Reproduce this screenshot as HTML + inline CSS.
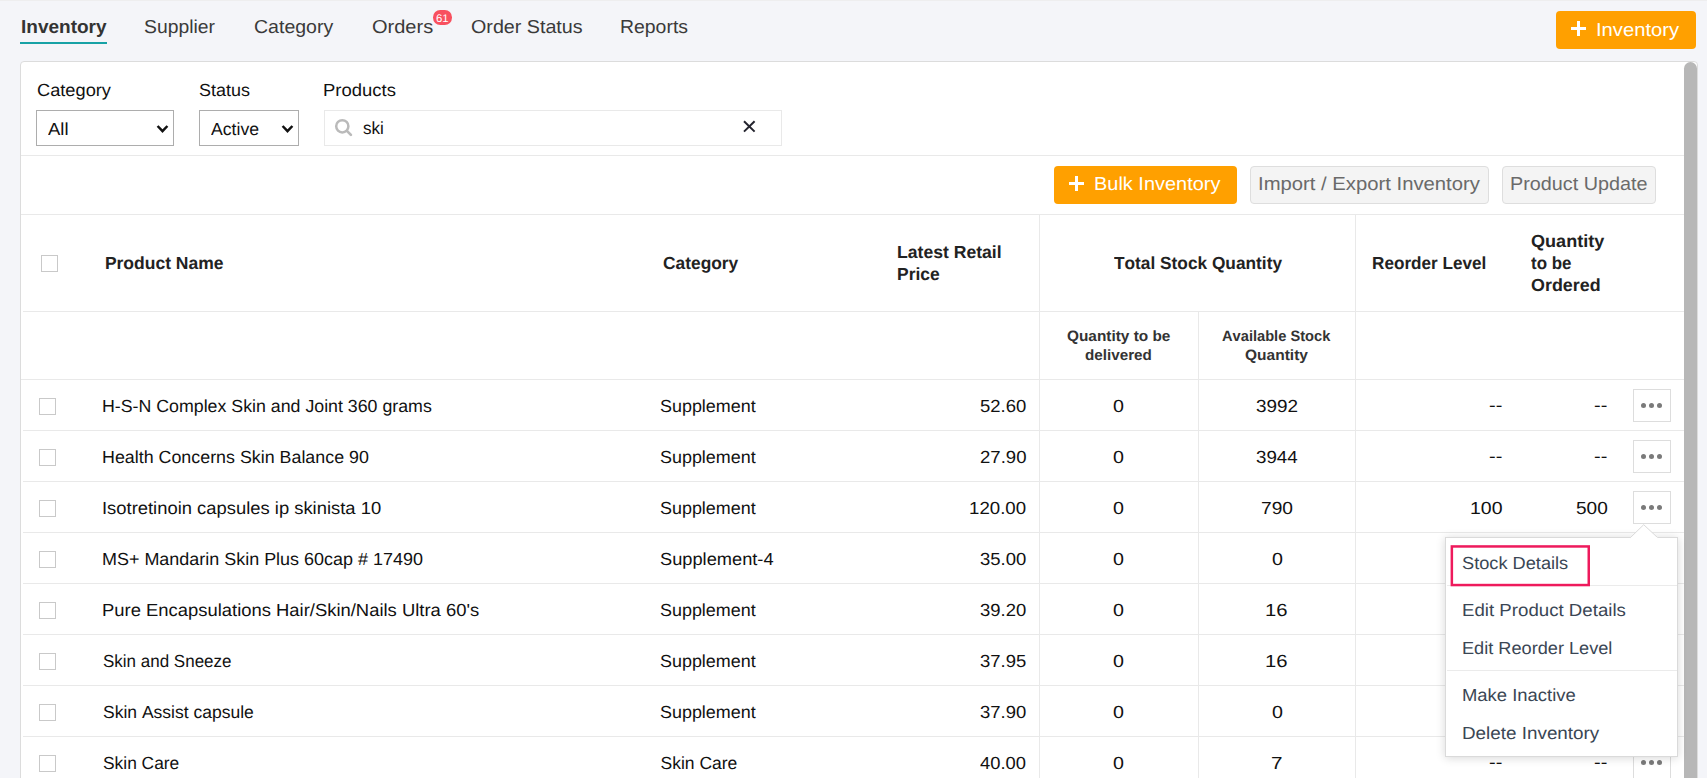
<!DOCTYPE html>
<html><head><meta charset="utf-8"><title>Inventory</title>
<style>
html,body{margin:0;padding:0;}
body{width:1707px;height:778px;overflow:hidden;background:#f4f5f9;position:relative;font-family:"Liberation Sans", sans-serif;font-kerning:none;text-rendering:geometricPrecision;}
.t{position:absolute;white-space:nowrap;line-height:1;transform-origin:0 0;}
.b{position:absolute;}
</style></head>
<body>
<div class="b" style="left:0px;top:0px;width:1707px;height:1px;background:#eeeeef;"></div>
<span class="t" style="left:20.53px;top:17.92px;font-size:18.75px;color:#333;font-weight:bold;transform:scaleX(1.0140);">Inventory</span>
<div class="b" style="left:20px;top:42px;width:87px;height:2.2px;background:#17a2a6;"></div>
<span class="t" style="left:144.42px;top:17.92px;font-size:18.75px;color:#3a3a3a;transform:scaleX(1.0306);">Supplier</span>
<span class="t" style="left:253.81px;top:17.92px;font-size:18.75px;color:#3a3a3a;transform:scaleX(1.0414);">Category</span>
<span class="t" style="left:371.55px;top:17.92px;font-size:18.75px;color:#3a3a3a;transform:scaleX(1.0675);">Orders</span>
<span class="t" style="left:470.87px;top:17.92px;font-size:18.75px;color:#3a3a3a;transform:scaleX(1.0503);">Order Status</span>
<span class="t" style="left:620.21px;top:17.92px;font-size:18.75px;color:#3a3a3a;transform:scaleX(1.0357);">Reports</span>
<div class="b" style="left:433px;top:10px;width:19px;height:14.5px;background:#f8505f;border-radius:7.25px;"></div>
<span class="t" style="left:436.27px;top:13.69px;font-size:11px;color:#fff;transform:scaleX(1.0323);">61</span>
<div class="b" style="left:1556px;top:11px;width:140px;height:38px;background:#ffa000;border-radius:4px;"></div>
<div class="b" style="left:1571.0px;top:27.200000000000003px;width:15px;height:2.8px;background:#fff;"></div>
<div class="b" style="left:1577.1px;top:21.1px;width:2.8px;height:15px;background:#fff;"></div>
<span class="t" style="left:1595.94px;top:20.67px;font-size:18.75px;color:#fff;transform:scaleX(1.0775);">Inventory</span>
<div class="b" style="left:20px;top:61px;width:1678px;height:740px;background:#fff;border:1px solid #dcdcdc;border-radius:4px;box-sizing:border-box;"></div>
<div class="b" style="left:1684px;top:62px;width:13px;height:740px;background:#b7b7b7;border-radius:6.5px 6.5px 0 0;"></div>
<span class="t" style="left:36.57px;top:82.28px;font-size:17.5px;color:#111;transform:scaleX(1.0416);">Category</span>
<span class="t" style="left:198.68px;top:82.28px;font-size:17.5px;color:#111;transform:scaleX(1.0273);">Status</span>
<span class="t" style="left:323.29px;top:82.28px;font-size:17.5px;color:#111;transform:scaleX(1.0553);">Products</span>
<div class="b" style="left:36px;top:110px;width:138px;height:36px;box-sizing:border-box;border:1px solid #adadad;border-radius:0;background:#fff;"></div>
<div class="b" style="left:199px;top:110px;width:100px;height:36px;box-sizing:border-box;border:1px solid #adadad;border-radius:0;background:#fff;"></div>
<span class="t" style="left:48.26px;top:120.98px;font-size:17.5px;color:#111;transform:scaleX(1.0524);">All</span>
<span class="t" style="left:210.77px;top:120.98px;font-size:17.5px;color:#111;transform:scaleX(1.0076);">Active</span>
<svg class="b" style="left:155px;top:123.4px" width="15" height="11.5" viewBox="-2 -2 15 11.5"><path d="M0.6 1 L5.5 6.1 L10.4 1" fill="none" stroke="#111" stroke-width="2.5" stroke-linecap="butt" stroke-linejoin="miter"/></svg>
<svg class="b" style="left:280px;top:123.4px" width="15" height="11.5" viewBox="-2 -2 15 11.5"><path d="M0.6 1 L5.5 6.1 L10.4 1" fill="none" stroke="#111" stroke-width="2.5" stroke-linecap="butt" stroke-linejoin="miter"/></svg>
<div class="b" style="left:324px;top:110px;width:458px;height:36px;box-sizing:border-box;border:1px solid #e9e9e9;background:#fff;"></div>
<svg class="b" style="left:333px;top:117px" width="22" height="22" viewBox="0 0 22 22"><circle cx="9.3" cy="9.3" r="6.1" fill="none" stroke="#bababa" stroke-width="2.5"/><path d="M13.9 13.9 L17.9 17.9" stroke="#bababa" stroke-width="2.7" stroke-linecap="round"/></svg>
<span class="t" style="left:362.83px;top:120.28px;font-size:17.5px;color:#111;transform:scaleX(0.9735);">ski</span>
<svg class="b" style="left:741px;top:118.4px" width="16" height="16" viewBox="0 0 16 16"><path d="M3 3.2 L13.6 13.6 M13.6 3.2 L3 13.6" stroke="#24242e" stroke-width="2" fill="none"/></svg>
<div class="b" style="left:21px;top:155px;width:1663px;height:1px;background:#e9e9e9;"></div>
<div class="b" style="left:1054px;top:166px;width:183px;height:38px;background:#ffa000;border-radius:4px;"></div>
<div class="b" style="left:1069.0px;top:182.4px;width:15px;height:2.8px;background:#fff;"></div>
<div class="b" style="left:1075.1px;top:176.3px;width:2.8px;height:15px;background:#fff;"></div>
<span class="t" style="left:1094.16px;top:175.42px;font-size:18.75px;color:#fff;transform:scaleX(1.0637);">Bulk Inventory</span>
<div class="b" style="left:1250px;top:166px;width:239px;height:38px;box-sizing:border-box;background:#f4f4f4;border:1px solid #dedede;border-radius:4px;"></div>
<span class="t" style="left:1257.68px;top:175.42px;font-size:18.75px;color:#6a6a6a;transform:scaleX(1.0807);">Import / Export Inventory</span>
<div class="b" style="left:1502px;top:166px;width:154px;height:38px;box-sizing:border-box;background:#f4f4f4;border:1px solid #dedede;border-radius:4px;"></div>
<span class="t" style="left:1509.68px;top:175.42px;font-size:18.75px;color:#6a6a6a;transform:scaleX(1.0550);">Product Update</span>
<div class="b" style="left:21px;top:214px;width:1663px;height:1px;background:#e9e9e9;"></div>
<div class="b" style="left:23px;top:311px;width:1661px;height:1px;background:#e9e9e9;"></div>
<div class="b" style="left:21px;top:379px;width:1663px;height:1px;background:#e9e9e9;"></div>
<div class="b" style="left:23px;top:430px;width:1661px;height:1px;background:#e9e9e9;"></div>
<div class="b" style="left:23px;top:481px;width:1661px;height:1px;background:#e9e9e9;"></div>
<div class="b" style="left:23px;top:532px;width:1661px;height:1px;background:#e9e9e9;"></div>
<div class="b" style="left:23px;top:583px;width:1661px;height:1px;background:#e9e9e9;"></div>
<div class="b" style="left:23px;top:634px;width:1661px;height:1px;background:#e9e9e9;"></div>
<div class="b" style="left:23px;top:685px;width:1661px;height:1px;background:#e9e9e9;"></div>
<div class="b" style="left:23px;top:736px;width:1661px;height:1px;background:#e9e9e9;"></div>
<div class="b" style="left:1039px;top:214px;width:1px;height:564px;background:#e9e9e9;"></div>
<div class="b" style="left:1198px;top:311px;width:1px;height:467px;background:#e9e9e9;"></div>
<div class="b" style="left:1355px;top:214px;width:1px;height:564px;background:#e9e9e9;"></div>
<div class="b" style="left:41px;top:255px;width:17px;height:17px;box-sizing:border-box;border:1px solid #c9c9c9;background:#fff;"></div>
<span class="t" style="left:104.88px;top:254.73px;font-size:17.5px;color:#222;font-weight:bold;">Product Name</span>
<span class="t" style="left:663.34px;top:254.73px;font-size:17.5px;color:#222;font-weight:bold;transform:scaleX(0.9921);">Category</span>
<span class="t" style="left:896.62px;top:243.98px;font-size:17.5px;color:#222;font-weight:bold;transform:scaleX(1.0054);">Latest Retail</span>
<span class="t" style="left:896.63px;top:265.98px;font-size:17.5px;color:#222;font-weight:bold;transform:scaleX(0.9978);">Price</span>
<span class="t" style="left:1113.61px;top:255.48px;font-size:17.5px;color:#222;font-weight:bold;transform:scaleX(0.9873);">Total Stock Quantity</span>
<span class="t" style="left:1371.90px;top:254.98px;font-size:17.5px;color:#222;font-weight:bold;transform:scaleX(0.9794);">Reorder Level</span>
<span class="t" style="left:1530.56px;top:232.98px;font-size:17.5px;color:#222;font-weight:bold;transform:scaleX(1.0326);">Quantity</span>
<span class="t" style="left:1531.09px;top:254.98px;font-size:17.5px;color:#222;font-weight:bold;transform:scaleX(0.9685);">to be</span>
<span class="t" style="left:1530.57px;top:276.98px;font-size:17.5px;color:#222;font-weight:bold;transform:scaleX(1.0226);">Ordered</span>
<span class="t" style="left:1066.92px;top:329.00px;font-size:15px;color:#333;font-weight:bold;transform:scaleX(1.0250);">Quantity to be</span>
<span class="t" style="left:1085.18px;top:347.70px;font-size:15px;color:#333;font-weight:bold;transform:scaleX(1.0146);">delivered</span>
<span class="t" style="left:1222.44px;top:329.00px;font-size:15px;color:#333;font-weight:bold;transform:scaleX(0.9767);">Available Stock</span>
<span class="t" style="left:1245.16px;top:347.70px;font-size:15px;color:#333;font-weight:bold;transform:scaleX(1.0343);">Quantity</span>
<div class="b" style="left:39px;top:398px;width:17px;height:17px;box-sizing:border-box;border:1px solid #c9c9c9;background:#fff;"></div>
<span class="t" style="left:102.34px;top:397.73px;font-size:17.5px;color:#111;transform:scaleX(1.0152);">H-S-N Complex Skin and Joint 360 grams</span>
<span class="t" style="left:660.49px;top:397.73px;font-size:17.5px;color:#111;transform:scaleX(1.0241);">Supplement</span>
<span class="t" style="left:979.96px;top:397.73px;font-size:17.5px;color:#111;transform:scaleX(1.0564);">52.60</span>
<span class="t" style="left:1113.13px;top:397.73px;font-size:17.5px;color:#111;transform:scaleX(1.1237);">0</span>
<span class="t" style="left:1255.88px;top:397.73px;font-size:17.5px;color:#111;transform:scaleX(1.0807);">3992</span>
<span class="t" style="left:1489.11px;top:397.13px;font-size:17.5px;color:#111;transform:scaleX(1.1386);">--</span>
<span class="t" style="left:1594.11px;top:397.13px;font-size:17.5px;color:#111;transform:scaleX(1.1386);">--</span>
<div class="b" style="left:1633px;top:389px;width:38px;height:33px;box-sizing:border-box;border:1px solid #dddddd;background:#fff;"></div>
<div class="b" style="left:1640.7px;top:403.2px;width:5px;height:5px;background:#7a7a7a;border-radius:50%;"></div>
<div class="b" style="left:1648.9px;top:403.2px;width:5px;height:5px;background:#7a7a7a;border-radius:50%;"></div>
<div class="b" style="left:1657.1px;top:403.2px;width:5px;height:5px;background:#7a7a7a;border-radius:50%;"></div>
<div class="b" style="left:39px;top:449px;width:17px;height:17px;box-sizing:border-box;border:1px solid #c9c9c9;background:#fff;"></div>
<span class="t" style="left:102.34px;top:448.73px;font-size:17.5px;color:#111;transform:scaleX(1.0198);">Health Concerns Skin Balance 90</span>
<span class="t" style="left:660.49px;top:448.73px;font-size:17.5px;color:#111;transform:scaleX(1.0241);">Supplement</span>
<span class="t" style="left:979.77px;top:448.73px;font-size:17.5px;color:#111;transform:scaleX(1.0609);">27.90</span>
<span class="t" style="left:1113.13px;top:448.73px;font-size:17.5px;color:#111;transform:scaleX(1.1237);">0</span>
<span class="t" style="left:1255.89px;top:448.73px;font-size:17.5px;color:#111;transform:scaleX(1.0702);">3944</span>
<span class="t" style="left:1489.11px;top:448.13px;font-size:17.5px;color:#111;transform:scaleX(1.1386);">--</span>
<span class="t" style="left:1594.11px;top:448.13px;font-size:17.5px;color:#111;transform:scaleX(1.1386);">--</span>
<div class="b" style="left:1633px;top:440px;width:38px;height:33px;box-sizing:border-box;border:1px solid #dddddd;background:#fff;"></div>
<div class="b" style="left:1640.7px;top:454.2px;width:5px;height:5px;background:#7a7a7a;border-radius:50%;"></div>
<div class="b" style="left:1648.9px;top:454.2px;width:5px;height:5px;background:#7a7a7a;border-radius:50%;"></div>
<div class="b" style="left:1657.1px;top:454.2px;width:5px;height:5px;background:#7a7a7a;border-radius:50%;"></div>
<div class="b" style="left:39px;top:500px;width:17px;height:17px;box-sizing:border-box;border:1px solid #c9c9c9;background:#fff;"></div>
<span class="t" style="left:102.10px;top:499.73px;font-size:17.5px;color:#111;transform:scaleX(1.0511);">Isotretinoin capsules ip skinista 10</span>
<span class="t" style="left:660.49px;top:499.73px;font-size:17.5px;color:#111;transform:scaleX(1.0241);">Supplement</span>
<span class="t" style="left:969.13px;top:499.73px;font-size:17.5px;color:#111;transform:scaleX(1.0668);">120.00</span>
<span class="t" style="left:1113.13px;top:499.73px;font-size:17.5px;color:#111;transform:scaleX(1.1237);">0</span>
<span class="t" style="left:1260.69px;top:499.73px;font-size:17.5px;color:#111;transform:scaleX(1.0953);">790</span>
<span class="t" style="left:1470.47px;top:499.73px;font-size:17.5px;color:#111;transform:scaleX(1.1129);">100</span>
<span class="t" style="left:1575.99px;top:499.73px;font-size:17.5px;color:#111;transform:scaleX(1.0876);">500</span>
<div class="b" style="left:1633px;top:491px;width:38px;height:33px;box-sizing:border-box;border:1px solid #dddddd;background:#fff;"></div>
<div class="b" style="left:1640.7px;top:505.2px;width:5px;height:5px;background:#7a7a7a;border-radius:50%;"></div>
<div class="b" style="left:1648.9px;top:505.2px;width:5px;height:5px;background:#7a7a7a;border-radius:50%;"></div>
<div class="b" style="left:1657.1px;top:505.2px;width:5px;height:5px;background:#7a7a7a;border-radius:50%;"></div>
<div class="b" style="left:39px;top:551px;width:17px;height:17px;box-sizing:border-box;border:1px solid #c9c9c9;background:#fff;"></div>
<span class="t" style="left:102.33px;top:550.73px;font-size:17.5px;color:#111;transform:scaleX(1.0259);">MS+ Mandarin Skin Plus 60cap # 17490</span>
<span class="t" style="left:660.47px;top:550.73px;font-size:17.5px;color:#111;transform:scaleX(1.0423);">Supplement-4</span>
<span class="t" style="left:980.00px;top:550.73px;font-size:17.5px;color:#111;transform:scaleX(1.0555);">35.00</span>
<span class="t" style="left:1113.13px;top:550.73px;font-size:17.5px;color:#111;transform:scaleX(1.1237);">0</span>
<span class="t" style="left:1271.73px;top:550.73px;font-size:17.5px;color:#111;transform:scaleX(1.1237);">0</span>
<span class="t" style="left:1489.11px;top:550.13px;font-size:17.5px;color:#111;transform:scaleX(1.1386);">--</span>
<span class="t" style="left:1594.11px;top:550.13px;font-size:17.5px;color:#111;transform:scaleX(1.1386);">--</span>
<div class="b" style="left:1633px;top:542px;width:38px;height:33px;box-sizing:border-box;border:1px solid #dddddd;background:#fff;"></div>
<div class="b" style="left:1640.7px;top:556.2px;width:5px;height:5px;background:#7a7a7a;border-radius:50%;"></div>
<div class="b" style="left:1648.9px;top:556.2px;width:5px;height:5px;background:#7a7a7a;border-radius:50%;"></div>
<div class="b" style="left:1657.1px;top:556.2px;width:5px;height:5px;background:#7a7a7a;border-radius:50%;"></div>
<div class="b" style="left:39px;top:602px;width:17px;height:17px;box-sizing:border-box;border:1px solid #c9c9c9;background:#fff;"></div>
<span class="t" style="left:102.29px;top:601.73px;font-size:17.5px;color:#111;transform:scaleX(1.0524);">Pure Encapsulations Hair/Skin/Nails Ultra 60&#x27;s</span>
<span class="t" style="left:660.49px;top:601.73px;font-size:17.5px;color:#111;transform:scaleX(1.0241);">Supplement</span>
<span class="t" style="left:980.00px;top:601.73px;font-size:17.5px;color:#111;transform:scaleX(1.0555);">39.20</span>
<span class="t" style="left:1113.13px;top:601.73px;font-size:17.5px;color:#111;transform:scaleX(1.1237);">0</span>
<span class="t" style="left:1265.21px;top:601.73px;font-size:17.5px;color:#111;transform:scaleX(1.1576);">16</span>
<span class="t" style="left:1489.11px;top:601.13px;font-size:17.5px;color:#111;transform:scaleX(1.1386);">--</span>
<span class="t" style="left:1594.11px;top:601.13px;font-size:17.5px;color:#111;transform:scaleX(1.1386);">--</span>
<div class="b" style="left:1633px;top:593px;width:38px;height:33px;box-sizing:border-box;border:1px solid #dddddd;background:#fff;"></div>
<div class="b" style="left:1640.7px;top:607.2px;width:5px;height:5px;background:#7a7a7a;border-radius:50%;"></div>
<div class="b" style="left:1648.9px;top:607.2px;width:5px;height:5px;background:#7a7a7a;border-radius:50%;"></div>
<div class="b" style="left:1657.1px;top:607.2px;width:5px;height:5px;background:#7a7a7a;border-radius:50%;"></div>
<div class="b" style="left:39px;top:653px;width:17px;height:17px;box-sizing:border-box;border:1px solid #c9c9c9;background:#fff;"></div>
<span class="t" style="left:103.03px;top:652.73px;font-size:17.5px;color:#111;transform:scaleX(0.9710);">Skin and Sneeze</span>
<span class="t" style="left:660.49px;top:652.73px;font-size:17.5px;color:#111;transform:scaleX(1.0241);">Supplement</span>
<span class="t" style="left:980.00px;top:652.73px;font-size:17.5px;color:#111;transform:scaleX(1.0568);">37.95</span>
<span class="t" style="left:1113.13px;top:652.73px;font-size:17.5px;color:#111;transform:scaleX(1.1237);">0</span>
<span class="t" style="left:1265.21px;top:652.73px;font-size:17.5px;color:#111;transform:scaleX(1.1576);">16</span>
<span class="t" style="left:1489.11px;top:652.13px;font-size:17.5px;color:#111;transform:scaleX(1.1386);">--</span>
<span class="t" style="left:1594.11px;top:652.13px;font-size:17.5px;color:#111;transform:scaleX(1.1386);">--</span>
<div class="b" style="left:1633px;top:644px;width:38px;height:33px;box-sizing:border-box;border:1px solid #dddddd;background:#fff;"></div>
<div class="b" style="left:1640.7px;top:658.2px;width:5px;height:5px;background:#7a7a7a;border-radius:50%;"></div>
<div class="b" style="left:1648.9px;top:658.2px;width:5px;height:5px;background:#7a7a7a;border-radius:50%;"></div>
<div class="b" style="left:1657.1px;top:658.2px;width:5px;height:5px;background:#7a7a7a;border-radius:50%;"></div>
<div class="b" style="left:39px;top:704px;width:17px;height:17px;box-sizing:border-box;border:1px solid #c9c9c9;background:#fff;"></div>
<span class="t" style="left:103.00px;top:703.73px;font-size:17.5px;color:#111;">Skin Assist capsule</span>
<span class="t" style="left:660.49px;top:703.73px;font-size:17.5px;color:#111;transform:scaleX(1.0241);">Supplement</span>
<span class="t" style="left:980.00px;top:703.73px;font-size:17.5px;color:#111;transform:scaleX(1.0555);">37.90</span>
<span class="t" style="left:1113.13px;top:703.73px;font-size:17.5px;color:#111;transform:scaleX(1.1237);">0</span>
<span class="t" style="left:1271.73px;top:703.73px;font-size:17.5px;color:#111;transform:scaleX(1.1237);">0</span>
<span class="t" style="left:1489.11px;top:703.13px;font-size:17.5px;color:#111;transform:scaleX(1.1386);">--</span>
<span class="t" style="left:1594.11px;top:703.13px;font-size:17.5px;color:#111;transform:scaleX(1.1386);">--</span>
<div class="b" style="left:1633px;top:695px;width:38px;height:33px;box-sizing:border-box;border:1px solid #dddddd;background:#fff;"></div>
<div class="b" style="left:1640.7px;top:709.2px;width:5px;height:5px;background:#7a7a7a;border-radius:50%;"></div>
<div class="b" style="left:1648.9px;top:709.2px;width:5px;height:5px;background:#7a7a7a;border-radius:50%;"></div>
<div class="b" style="left:1657.1px;top:709.2px;width:5px;height:5px;background:#7a7a7a;border-radius:50%;"></div>
<div class="b" style="left:39px;top:755px;width:17px;height:17px;box-sizing:border-box;border:1px solid #c9c9c9;background:#fff;"></div>
<span class="t" style="left:103.01px;top:754.73px;font-size:17.5px;color:#111;transform:scaleX(0.9925);">Skin Care</span>
<span class="t" style="left:660.51px;top:754.73px;font-size:17.5px;color:#111;">Skin Care</span>
<span class="t" style="left:980.28px;top:754.73px;font-size:17.5px;color:#111;transform:scaleX(1.0490);">40.00</span>
<span class="t" style="left:1113.13px;top:754.73px;font-size:17.5px;color:#111;transform:scaleX(1.1237);">0</span>
<span class="t" style="left:1271.44px;top:754.73px;font-size:17.5px;color:#111;transform:scaleX(1.1816);">7</span>
<span class="t" style="left:1489.11px;top:754.13px;font-size:17.5px;color:#111;transform:scaleX(1.1386);">--</span>
<span class="t" style="left:1594.11px;top:754.13px;font-size:17.5px;color:#111;transform:scaleX(1.1386);">--</span>
<div class="b" style="left:1633px;top:746px;width:38px;height:33px;box-sizing:border-box;border:1px solid #dddddd;background:#fff;"></div>
<div class="b" style="left:1640.7px;top:760.2px;width:5px;height:5px;background:#7a7a7a;border-radius:50%;"></div>
<div class="b" style="left:1648.9px;top:760.2px;width:5px;height:5px;background:#7a7a7a;border-radius:50%;"></div>
<div class="b" style="left:1657.1px;top:760.2px;width:5px;height:5px;background:#7a7a7a;border-radius:50%;"></div>
<div class="b" style="left:1445px;top:537px;width:233px;height:219.5px;box-sizing:border-box;background:#fff;border:1px solid #dadada;box-shadow:0 1px 9px rgba(0,0,0,.16);"></div>
<svg class="b" style="left:1626px;top:522px" width="36" height="18" viewBox="0 0 36 18"><path d="M4 16 L17.7 2.7 L32 16" fill="#fff" stroke="#dadada" stroke-width="1"/><rect x="4.8" y="15.4" width="26.6" height="2" fill="#fff"/></svg>
<span class="t" style="left:1462.27px;top:554.98px;font-size:17.5px;color:#3a4654;transform:scaleX(1.0398);">Stock Details</span>
<span class="t" style="left:1461.57px;top:602.18px;font-size:17.5px;color:#3a4654;transform:scaleX(1.0665);">Edit Product Details</span>
<span class="t" style="left:1461.61px;top:639.98px;font-size:17.5px;color:#3a4654;transform:scaleX(1.0377);">Edit Reorder Level</span>
<span class="t" style="left:1461.59px;top:687.08px;font-size:17.5px;color:#3a4654;transform:scaleX(1.0534);">Make Inactive</span>
<span class="t" style="left:1461.55px;top:725.18px;font-size:17.5px;color:#3a4654;transform:scaleX(1.0773);">Delete Inventory</span>
<div class="b" style="left:1446.5px;top:585.3px;width:230.0px;height:1px;background:#ebebeb;"></div>
<div class="b" style="left:1446.5px;top:670.2px;width:230.0px;height:1px;background:#ebebeb;"></div>
<svg class="b" style="left:1448px;top:543px" width="146" height="47" viewBox="0 0 146 47"><rect x="3.85" y="3.45" width="136.9" height="38.6" fill="none" stroke="#ee1a5c" stroke-width="2.5"/></svg>
</body></html>
